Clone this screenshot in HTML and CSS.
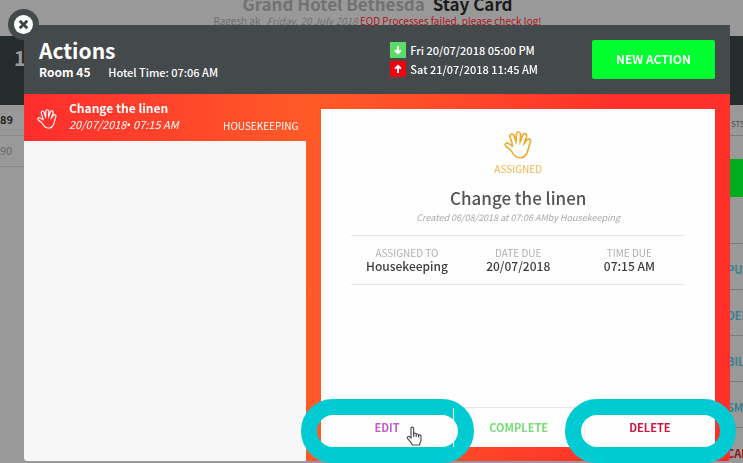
FILE: index.html
```
<!DOCTYPE html>
<html lang="en">
<head>
	<meta charset="utf-8">
	<title>Stay Card - Actions</title>
	<link rel="stylesheet" href="styles.css">
</head>
<body>
	<!-- Shared icons -->
	<svg class="icon-defs" aria-hidden="true">
		<symbol id="icon-hand" viewBox="0 0 28 28">
			<path d="M7.4 20 C5.6 18 3.4 16.8 1.8 15.2 C0.4 13.4 1.8 11.4 4 12.2 C5.6 12.9 7 14.2 8.4 15 C8.6 12 6.6 8.6 6 5.6 C5.6 2.8 8.8 2 9.9 4.4 C10.8 6.8 11.2 9 12 11 C12.4 8.4 12 5.4 12.4 3 C12.9 0.4 16.1 0.4 16.5 3 C16.7 5.8 16 8.6 16.2 11 C17.2 8.8 17.8 6.2 18.8 3.8 C20 1.4 23 2.6 22.6 5.4 C22 8 20.6 10.4 20.2 12.6 C21.4 11.2 22 9.6 23.4 8.4 C25.4 7 27.2 8.6 26.4 11 C25.2 13.6 24.8 16.2 24 19 C23 23.2 20.2 26.8 16 26.8 C11.8 26.8 9.2 23.6 7.4 20 Z"/>
		</symbol>
	</svg>

	<div class="page">
		<div class="page-header">
			<h1><span class="hotel-name">Grand Hotel Bethesda</span> <span class="page-name">Stay Card</span></h1>
			<p><span class="user-name">Ragesh ak</span> <em>Friday, 20 July 2018</em> <strong>EOD Processes failed, please check log!</strong></p>
		</div>
		<div class="page-banner">1</div>
		<div class="page-body">
			<ul class="page-rooms">
				<li class="active">89</li>
				<li>90</li>
			</ul>
			<div class="page-side">
				<div class="side-title">STS</div>
				<div class="side-action"><span class="side-button"></span></div>
				<a href="#">PUT</a>
				<a href="#">DEP</a>
				<a href="#">BILL</a>
				<a href="#">SMA</a>
				<a href="#" class="cancel">CAN</a>
			</div>
		</div>
	</div>

	<div class="modal" role="dialog" aria-labelledby="modal-title">
		<button type="button" class="modal-close" aria-label="Close">
			<svg viewBox="0 0 20 20">
				<circle cx="10" cy="10" r="10" fill="#fff"/>
				<path d="M6 6 L14 14 M14 6 L6 14" stroke="#3f4547" stroke-width="3" fill="none"/>
			</svg>
		</button>

		<div class="modal-header">
			<div class="modal-heading">
				<h2 id="modal-title">Actions</h2>
				<p><strong>Room 45</strong> <span>Hotel Time: 07:06 AM</span></p>
			</div>
			<div class="stay-dates">
				<div class="stay-date">
					<svg class="arrival" viewBox="0 0 16 16"><path d="M8 4 V11 M5 8.2 L8 11.2 L11 8.2"/></svg>
					<span>Fri 20/07/2018 05:00 PM</span>
				</div>
				<div class="stay-date">
					<svg class="departure" viewBox="0 0 16 16"><path d="M8 12 V5 M5 7.8 L8 4.8 L11 7.8"/></svg>
					<span>Sat 21/07/2018 11:45 AM</span>
				</div>
			</div>
			<button type="button" class="new-action">NEW ACTION</button>
		</div>

		<div class="modal-body">
			<div class="action-list">
				<a href="#" class="action-item">
					<svg class="icon"><use href="#icon-hand"/></svg>
					<span class="action-info">
						<strong>Change the linen</strong>
						<em>20/07/2018<span class="bullet">•</span> 07:15 AM</em>
					</span>
					<span class="department">HOUSEKEEPING</span>
				</a>
				<div class="action-list-empty"></div>
			</div>

			<div class="action-card">
				<div class="action-content">
					<svg class="icon"><use href="#icon-hand"/></svg>
					<p class="status">ASSIGNED</p>
					<h3>Change the linen</h3>
					<p class="created">Created 06/08/2018 at 07:06 AMby Housekeeping</p>
					<dl class="details">
						<div>
							<dt>ASSIGNED TO</dt>
							<dd>Housekeeping</dd>
						</div>
						<div>
							<dt>DATE DUE</dt>
							<dd>20/07/2018</dd>
						</div>
						<div>
							<dt>TIME DUE</dt>
							<dd>07:15 AM</dd>
						</div>
					</dl>
				</div>
				<div class="action-footer">
					<div class="footer-cell">
						<button type="button" class="edit">EDIT</button>
						<span class="highlight"></span>
						<svg class="cursor" viewBox="0 0 16 20">
							<path d="M5 12 V2.6 C5 0.6 7.6 0.6 7.6 2.6 V8 C8 6.8 10.2 7 10.2 8.6 C10.8 7.6 12.6 7.8 12.6 9.4 C13.4 8.6 15 9 15 10.6 V14 C15 16 13.8 17 13.4 19 H6.4 C5.6 16.8 3.2 14.6 1.6 12.4 C0.6 10.8 2.4 9.8 3.6 10.8 Z M7.6 8 V11 M10.2 8.6 V11 M12.6 9.4 V11.4"/>
						</svg>
					</div>
					<div class="footer-cell">
						<button type="button" class="complete">COMPLETE</button>
					</div>
					<div class="footer-cell">
						<button type="button" class="delete">DELETE</button>
						<span class="highlight"></span>
					</div>
				</div>
			</div>
		</div>
	</div>
</body>
</html>
```

FILE: styles.css
```
:root {
  --dark: #44494b;
  --page-grey: #999999;
  --line: #e8e8e8;
  --teal: #00cad2;
}

* {
  box-sizing: border-box;
}

body {
  margin: 0;
  height: 100vh;
  overflow: hidden;
  background-color: var(--page-grey);
  font-family: "Noto Sans CJK SC", "Noto Sans", sans-serif;
  font-size: 12px;
  line-height: 16px;
}

h1, h2, h3, p, ul, dl, dd {
  margin: 0;
  padding: 0;
}

a {
  text-decoration: none;
}

button {
  border: none;
  padding: 0;
  font-family: inherit;
  cursor: pointer;
}

.icon-defs {
  display: none;
}

/* page behind the modal */
.page-header {
  height: 36px;
  padding-left: 12px;
  text-align: center;
  white-space: nowrap;
  overflow: hidden;
}

.page-header h1 {
  margin-top: -6px;
  font-size: 17px;
  line-height: 20px;
}

.hotel-name {
  margin-right: 4px;
  color: #727272;
}

.page-name {
  color: #1c1c1c;
}

.page-header p {
  font-size: 10px;
  line-height: 14px;
  color: #707070;
}

.user-name {
  margin-right: 4px;
}

.page-header strong {
  font-weight: normal;
  color: #b3101c;
}

.page-banner {
  height: 69px;
  padding: 10px 14px;
  background-color: #262b2c;
  color: #999999;
  font-size: 20px;
  font-weight: bold;
  line-height: 24px;
}

.page-body {
  display: flex;
  justify-content: space-between;
}

.page-rooms {
  width: 24px;
  list-style: none;
  color: #686868;
}

.page-rooms li {
  height: 31px;
  line-height: 28px;
  font-size: 11px;
  border-bottom: 1px solid #8a8a8a;
}

.page-rooms .active {
  font-weight: bold;
  color: #222222;
}

.page-side {
  width: 16px;
  overflow: hidden;
}

.side-title {
  height: 31px;
  padding-left: 4px;
  border-bottom: 1px solid #7c7c7c;
  font-size: 8px;
  line-height: 38px;
  color: #555555;
}

.side-action {
  height: 108px;
  padding-top: 23px;
  border-bottom: 1px solid #7c7c7c;
}

.side-button {
  display: block;
  height: 38px;
  background-color: #00ad1c;
}

.page-side a {
  display: block;
  height: 46px;
  border-bottom: 1px solid #7c7c7c;
  font-size: 11px;
  font-weight: bold;
  line-height: 50px;
  color: #3d7f8c;
}

.page-side .cancel {
  color: #8f1220;
}

/* modal */
.modal {
  position: fixed;
  inset: 25px 13px 2px 24px;
  display: flex;
  flex-direction: column;
}

.modal-close {
  position: absolute;
  top: -16px;
  left: -16px;
  width: 31px;
  height: 31px;
  padding: 6px;
  border-radius: 50%;
  background-color: var(--dark);
}

.modal-close svg {
  display: block;
}

.modal-header {
  display: flex;
  align-items: center;
  height: 69px;
  padding: 0 15px;
  background-color: var(--dark);
  color: white;
}

.modal-heading {
  flex: 1;
}

.modal-heading h2 {
  font-size: 21px;
  line-height: 24px;
}

.modal-heading p {
  line-height: 20px;
}

.modal-heading span {
  margin-left: 15px;
  font-size: 11px;
  font-weight: 500;
}

.stay-dates {
  margin-right: 54px;
}

.stay-date {
  display: flex;
  align-items: center;
  gap: 4px;
  height: 19px;
  font-size: 11px;
  font-weight: 500;
}

.stay-date svg {
  width: 16px;
  height: 16px;
  fill: none;
  stroke: white;
  stroke-width: 2;
}

.arrival {
  background-color: #5ddb68;
}

.departure {
  background-color: #f5000f;
}

.new-action {
  width: 123px;
  height: 39px;
  padding-bottom: 2px;
  border-radius: 2px;
  background-color: #00ff2e;
  color: white;
  font-size: 12px;
  font-weight: bold;
}

.modal-body {
  flex: 1;
  display: grid;
  grid-template-columns: 40% 1fr;
  border-radius: 0 0 3px 3px;
  background: linear-gradient(90deg, #ff2d2d 0%, #ff5a28 40%, #ff4a28 60%, #ff2f2a 85%);
}

.action-list {
  display: flex;
  flex-direction: column;
}

.action-item {
  display: flex;
  height: 47px;
  padding: 6px 8px 0 13px;
  color: white;
}

.action-item .icon {
  width: 20px;
  height: 22px;
  margin-top: 8px;
  fill: none;
  stroke: white;
  stroke-width: 1.6;
}

.action-info {
  flex: 1;
  display: flex;
  flex-direction: column;
  margin-left: 12px;
}

.action-info em {
  font-size: 11px;
}

.bullet {
  font-family: "Noto Sans", sans-serif;
}

.department {
  align-self: flex-end;
  padding-bottom: 8px;
  font-size: 10px;
  line-height: 14px;
}

.action-list-empty {
  flex: 1;
  border-bottom-left-radius: 3px;
  background-color: #f7f7f7;
}

.action-card {
  display: flex;
  flex-direction: column;
  margin: 15px 15px 14px;
  background-color: #fefefe;
  text-align: center;
}

.action-content {
  flex: 1;
  padding: 22px 30px 0;
}

.action-content .icon {
  display: block;
  width: 28px;
  height: 28px;
  margin: 0 auto;
  fill: none;
  stroke: #eda928;
  stroke-width: 1.6;
}

.status {
  margin-top: 2px;
  font-size: 10px;
  color: #efb54a;
}

.action-content h3 {
  margin-top: 9px;
  font-size: 17px;
  font-weight: 500;
  line-height: 24px;
  color: #555555;
}

.created {
  font-size: 9px;
  font-style: italic;
  color: #a8a8a8;
}

.details {
  display: grid;
  grid-template-columns: repeat(3, 1fr);
  margin-top: 9px;
  padding: 11px 0;
  border-top: 1px solid var(--line);
  border-bottom: 1px solid var(--line);
}

.details dt {
  font-size: 10px;
  line-height: 12px;
  color: #b0b0b0;
}

.details dd {
  font-weight: 500;
  line-height: 14px;
  color: #3c3c3c;
}

.action-footer {
  display: grid;
  grid-template-columns: repeat(3, 1fr);
  height: 40px;
  border-top: 1px solid var(--line);
}

.footer-cell {
  position: relative;
}

.footer-cell + .footer-cell {
  border-left: 1px solid #f3f3f3;
}

.footer-cell button {
  width: 100%;
  height: 38px;
  background: none;
  font-size: 11px;
  font-weight: bold;
}

.edit {
  color: #c25cc2;
}

.complete {
  color: #76dc76;
}

.delete {
  color: #d01440;
}

.highlight {
  position: absolute;
  inset: -9px -21px -16px -20px;
  border: 16px solid var(--teal);
  border-radius: 32px;
  pointer-events: none;
}

.cursor {
  position: absolute;
  top: 18px;
  right: 31px;
  width: 16px;
  height: 20px;
  fill: white;
  stroke: #4a4f57;
  stroke-width: 1.2;
}
```
